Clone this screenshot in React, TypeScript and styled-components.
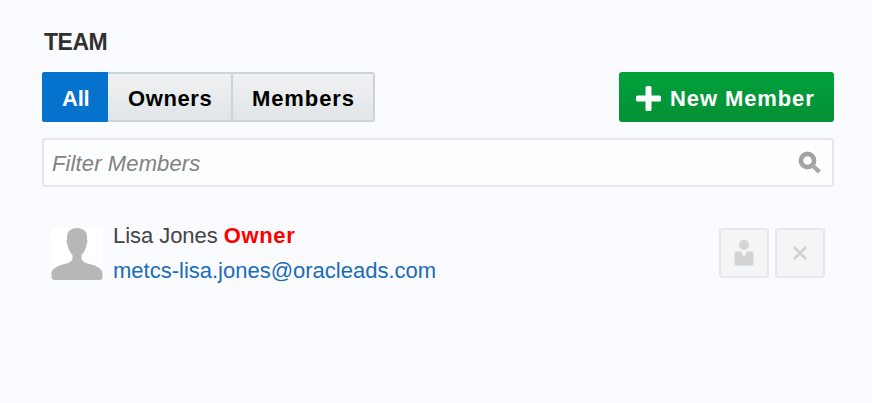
import React from "react";
import styled, { createGlobalStyle } from "styled-components";

const GlobalStyle = createGlobalStyle`
  * { box-sizing: border-box; }
  body {
    margin: 0;
    background: #fafbff;
    font-family: "Liberation Sans", Arial, sans-serif;
    font-size: 22px;
    color: #383838;
  }
`;

const Panel = styled.main`
  width: 872px;
  height: 403px;
  padding: 30px 38px 0 42px;
  background: #fafbff;
`;

const Title = styled.h1`
  margin: 0 0 17px 2px;
  font-size: 23px;
  line-height: 25px;
  letter-spacing: -0.5px;
  color: #303030;
`;

const Toolbar = styled.div`
  display: flex;
  justify-content: space-between;
  height: 50px;
  margin-bottom: 16px;
`;

const Tabs = styled.div`
  display: flex;
  width: 333px;
`;

const Label = styled.span<{ $spacing: number }>`
  letter-spacing: ${(p) => p.$spacing}px;
  white-space: nowrap;
`;

const Tab = styled.button<{ $active?: boolean; $width: number; $inset: number }>`
  flex: 0 0 ${(p) => p.$width}px;
  height: 50px;
  padding: 3px 0 0 ${(p) => p.$inset}px;
  border: solid ${(p) => (p.$active ? "#0572ce" : "#cbd4dd")};
  border-width: ${(p) => (p.$active ? "1px" : "2px 2px 2px 0")};
  background: ${(p) => (p.$active ? "#0572ce" : "linear-gradient(#f0f1f2, #e1e5e8)")};
  color: ${(p) => (p.$active ? "#fff" : "#000")};
  font: bold 22px "Liberation Sans", Arial, sans-serif;
  text-align: left;
  &:first-child { border-radius: 2px 0 0 2px; }
  &:last-child { border-radius: 0 3px 3px 0; }
`;

const NewMember = styled.button`
  display: flex;
  align-items: center;
  gap: 9px;
  width: 215px;
  height: 50px;
  padding: 3px 0 0 17px;
  border: 0;
  border-radius: 3px;
  background: linear-gradient(#02a13c, #039034);
  color: #fff;
  font: bold 22px "Liberation Sans", Arial, sans-serif;
`;

const Filter = styled.label`
  display: flex;
  align-items: center;
  justify-content: space-between;
  height: 49px;
  padding: 0 10px 0 8px;
  border: 2px solid #e5e7ea;
  border-radius: 3px;
  background: #fdfeff;
`;

const FilterInput = styled.input`
  width: 400px;
  padding: 3px 0 0;
  border: 0;
  outline: 0;
  background: transparent;
  font: italic 22px "Liberation Sans", Arial, sans-serif;
  letter-spacing: 0.12px;
  &::placeholder { color: #828282; opacity: 1; }
`;

const Member = styled.section`
  display: flex;
  align-items: flex-start;
  margin-top: 32px;
  padding: 0 9px;
`;

const Avatar = styled.svg`
  flex: none;
  width: 52px;
  height: 52px;
  margin-top: 9px;
  background: #fff;
`;

const Details = styled.div`
  flex: 1;
  margin-left: 10px;
  line-height: 34px;
`;

const Name = styled.div`
  color: #444;
  white-space: nowrap;
  letter-spacing: -0.05px;
`;

const Role = styled.strong`
  color: #f00;
  letter-spacing: 0.65px;
`;

const Email = styled.a`
  display: block;
  padding-top: 1px;
  color: #1b6cb8;
  text-decoration: none;
`;

const Actions = styled.div`
  display: flex;
  gap: 6px;
  margin-top: 9px;
`;

const IconButton = styled.button`
  display: grid;
  place-items: center;
  width: 50px;
  height: 50px;
  padding: 0;
  border: 2px solid #e2e8ec;
  border-radius: 3px;
  background: #f4f5f7;
`;

const Glyph = styled.svg`
  display: block;
  flex: none;
`;

export default function App() {
  return (
    <>
      <GlobalStyle />
      <Panel>
        <Title>TEAM</Title>
        <Toolbar>
          <Tabs>
            <Tab $active $width={66} $inset={19}><Label $spacing={-0.2}>All</Label></Tab>
            <Tab $width={125} $inset={20}><Label $spacing={0.6}>Owners</Label></Tab>
            <Tab $width={142} $inset={19}><Label $spacing={0.9}>Members</Label></Tab>
          </Tabs>
          <NewMember>
            <Glyph width="25" height="25" viewBox="0 0 25 25">
              <rect x="9.5" y="0" width="6" height="25" rx="1.5" fill="#fff" />
              <rect x="0" y="9.5" width="25" height="6" rx="1.5" fill="#fff" />
            </Glyph>
            <Label $spacing={0.9}>New Member</Label>
          </NewMember>
        </Toolbar>
        <Filter>
          <FilterInput placeholder="Filter Members" aria-label="Filter Members" />
          <Glyph width="24" height="24" viewBox="0 0 24 24">
            <circle cx="9.5" cy="9.5" r="6.6" fill="none" stroke="#a2a2a2" strokeWidth="4.6" />
            <path d="M14 14l7.500 7" stroke="#a8a8a8" strokeWidth="4.4" />
          </Glyph>
        </Filter>
        <Member>
          <Avatar viewBox="0 0 52 52">
            <path
              d="M26 0C19.500 0 16 3.500 16 9v3c-.8 1-.5 2.500.3 4 .5 4 1.700 7 5.200 11v3.500c-.5 2-1.500 3-3.500 4-3 1.500-6.500 1.800-9.500 3C4 39.500.5 41.500.5 46v3q0 3 3 3h45q3 0 3-3v-3c0-4.500-3.500-6.500-8-8.500-3-1.200-6.500-1.500-9.500-3-2-1-3-2-3.500-4V27c3.500-4 4.700-7 5.200-11 .8-1.500 1.100-3 .3-4V9C36 3.500 32.500 0 26 0z"
              fill="#b7b7b7"
            />
          </Avatar>
          <Details>
            <Name>Lisa Jones <Role>Owner</Role></Name>
            <Email href="#">metcs-lisa.jones@oracleads.com</Email>
          </Details>
          <Actions>
            <IconButton aria-label="Set as owner">
              <Glyph width="20" height="28" viewBox="0 0 20 28">
                <circle cx="10" cy="6" r="5" fill="#d3d3d3" />
                <path d="M2 12.500h5l3 6 3-6h5q1.500 0 1.500 1.500v11q0 1.500-1.500 1.500H2Q.5 26.500.5 25V14q0-1.500 1.500-1.500z" fill="#d3d3d3" />
              </Glyph>
            </IconButton>
            <IconButton aria-label="Remove member">
              <Glyph width="16" height="16" viewBox="0 0 16 16">
                <path d="M2 2l12 12M14 2L2 14" stroke="#d2d2d2" strokeWidth="2.8" />
              </Glyph>
            </IconButton>
          </Actions>
        </Member>
      </Panel>
    </>
  );
}
